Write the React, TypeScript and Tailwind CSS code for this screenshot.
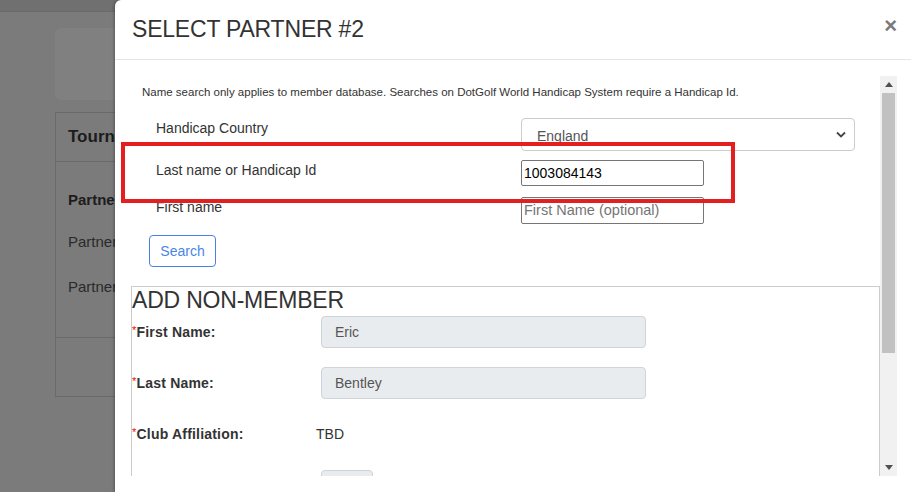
import React from 'react';

const font = { fontFamily: '"Liberation Sans", Arial, sans-serif' };

const BackgroundPage = () => (
  <div className="w-[911px] h-[492px] bg-[#7b7b7b] overflow-hidden">
    <div className="h-[12px] bg-[#707070] border-b border-[#6a6a6a]" />
    <div className="pl-[55px] pt-[16px]">
      <div className="w-[120px] h-[72px] rounded-[6px] bg-[#808080]" />
      <div className="mt-[12px] w-[500px] h-[285px] border border-[#6a6a6a] flex flex-col">
        <div className="h-[49px] border-b border-[#6a6a6a] flex items-center pl-[12px]">
          <span className="text-[17px] font-bold text-[#1c1c1c]">Tournament</span>
        </div>
        <div className="flex-1 border-b border-[#6a6a6a] pl-[12px] pt-[28px]">
          <div className="text-[15px] font-bold text-[#1c1c1c] leading-[20px]">Partners</div>
          <div className="text-[15px] text-[#2a2a2a] leading-[20px] mt-[22px]">Partner 1</div>
          <div className="text-[15px] text-[#2a2a2a] leading-[20px] mt-[25px]">Partner 2</div>
        </div>
        <div className="h-[58px]" />
      </div>
    </div>
  </div>
);

const Scrollbar = () => (
  <div className="w-[17px] h-full bg-[#f1f1f1] flex flex-col items-center shrink-0">
    <div className="h-[17px] w-full flex items-center justify-center">
      <svg width="8" height="5" viewBox="0 0 8 5"><polygon points="0,5 8,5 4,0" fill="#505050" /></svg>
    </div>
    <div className="w-[13px] h-[260px] bg-[#c1c1c1]" />
    <div className="flex-1" />
    <div className="h-[17px] w-full flex items-center justify-center">
      <svg width="8" height="5" viewBox="0 0 8 5"><polygon points="0,0 8,0 4,5" fill="#505050" /></svg>
    </div>
  </div>
);

const FieldRow = ({ label, children }: { label: string; children: React.ReactNode }) => (
  <div className="flex items-center h-[32px]">
    <div className="w-[189px] text-[14px] font-bold text-[#333] tracking-[0.2px]">
      <span className="text-[#e00] font-normal text-[11px] align-top">*</span>
      {label}
    </div>
    {children}
  </div>
);

const DisabledInput = ({ value }: { value: string }) => (
  <div className="w-[325px] h-[32px] rounded-[4px] bg-[#e9ecef] border border-[#ced4da] px-[13px] flex items-center text-[14px] text-[#555]">
    {value}
  </div>
);

export default function App() {
  return (
    <div className="relative w-[911px] h-[492px] overflow-hidden" style={font}>
      <BackgroundPage />
      <div className="absolute left-[115px] top-0 w-[810px] h-[492px] bg-white rounded-tl-[6px] shadow-[-1px_0_3px_rgba(0,0,0,0.3)] flex flex-col">
        <div className="h-[60px] border-b border-[#e5e5e5] flex items-center justify-between pl-[17px] pr-[28px] shrink-0">
          <h2 className="text-[23px] text-[#333] font-normal leading-none tracking-[-0.2px]">SELECT PARTNER #2</h2>
          <span className="text-[22px] font-bold text-[#7a7a7a] leading-none -mt-[8px]">×</span>
        </div>

        <div className="pl-[16px] pt-[16px]">
          <div className="w-[766px] h-[400px] flex">
            <div className="flex-1 overflow-hidden">
              <p className="text-[11.5px] leading-[16px] text-[#333] pl-[11px] pt-[8px]">
                Name search only applies to member database. Searches on DotGolf World Handicap System require a Handicap Id.
              </p>

              <div className="mt-[18px] pl-[25px]">
                <div className="flex h-[33px]">
                  <div className="w-[365px] text-[14px] leading-[20px] text-[#333]">Handicap Country</div>
                  <div className="w-[334px] h-[33px] border border-[#ccc] rounded-[4px] flex items-center justify-between pl-[15px] pr-[8px] text-[14px] text-[#555]">
                    <span className="mt-[3px]">England</span>
                    <svg width="10" height="7" viewBox="0 0 10 7" fill="none">
                      <path d="M1 1.5 L5 5.5 L9 1.5" stroke="#444" strokeWidth="1.8" />
                    </svg>
                  </div>
                </div>

                <div className="flex h-[26px] mt-[9px]">
                  <div className="w-[365px] text-[14px] leading-[20px] text-[#333]">Last name or Handicap Id</div>
                  <div className="w-[183px] h-[26px] border border-[#767676] rounded-[2px] flex items-center pl-[2px] text-[14px] text-black">
                    1003084143
                  </div>
                </div>

                <div className="flex h-[27px] mt-[11px]">
                  <div className="w-[365px] text-[14px] leading-[20px] text-[#333]">First name</div>
                  <div className="w-[183px] h-[27px] border border-[#767676] rounded-[2px] flex items-center pl-[2px] text-[14.5px] text-[#757575]">
                    First Name (optional)
                  </div>
                </div>

                <button className="mt-[11px] -ml-[7px] w-[67px] h-[32px] border border-[#4a80e4] rounded-[4px] text-[14px] text-[#4a86e8] bg-white">
                  Search
                </button>
              </div>

              <div className="mt-[19px] w-[749px] border border-[#ccc] h-[300px]">
                <div className="text-[23px] leading-[26px] text-[#333] tracking-[-0.2px]">ADD NON-MEMBER</div>
                <div className="mt-[3px]">
                  <FieldRow label="First Name:">
                    <DisabledInput value="Eric" />
                  </FieldRow>
                </div>
                <div className="mt-[19px]">
                  <FieldRow label="Last Name:">
                    <DisabledInput value="Bentley" />
                  </FieldRow>
                </div>
                <div className="mt-[19px]">
                  <FieldRow label="Club Affiliation:">
                    <span className="-ml-[5px] text-[14px] text-[#333]">TBD</span>
                  </FieldRow>
                </div>
                <div className="mt-[20px] flex">
                  <div className="w-[189px]" />
                  <div className="w-[52px] h-[32px] rounded-[4px] bg-[#e9ecef] border border-[#ced4da]" />
                </div>
              </div>
            </div>
            <Scrollbar />
          </div>
        </div>

        <div className="absolute left-[6px] top-[142px] w-[614px] h-[61px] border-[4px] border-[#e41f1f] pointer-events-none" />
      </div>
    </div>
  );
}
